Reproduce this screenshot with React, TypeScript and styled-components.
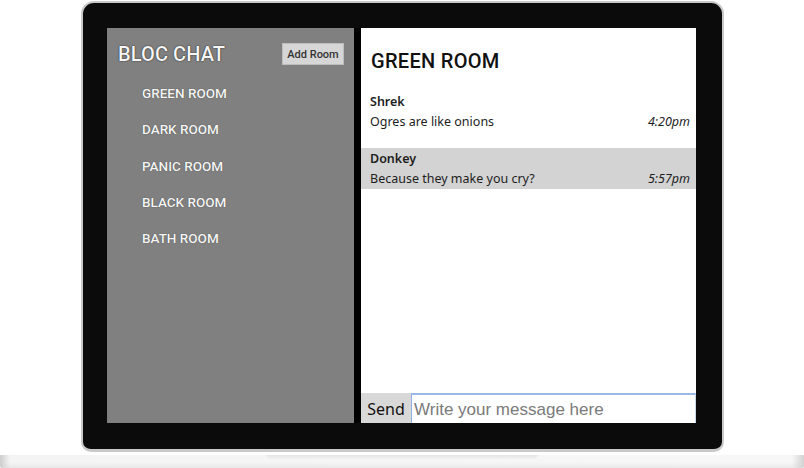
import styled, { createGlobalStyle } from "styled-components";

const Global = createGlobalStyle`
  html, body {
    margin: 0;
    padding: 0;
    background: #ffffff;
  }
  body {
    width: 804px;
    height: 468px;
    overflow: hidden;
  }
`;

const rooms = ["GREEN ROOM", "DARK ROOM", "PANIC ROOM", "BLACK ROOM", "BATH ROOM"];

const messages = [
  { user: "Shrek", content: "Ogres are like onions", time: "4:20pm", shaded: false },
  { user: "Donkey", content: "Because they make you cry?", time: "5:57pm", shaded: true },
];

const Stage = styled.div`
  width: 804px;
  height: 468px;
  display: flex;
  flex-direction: column;
  align-items: flex-start;
`;

const Bezel = styled.div`
  margin-left: 81px;
  margin-top: 1px;
  width: 643px;
  height: 451px;
  box-sizing: border-box;
  padding: 27px 26px 27px 26px;
  background: #0a0b0a;
  border: 2px solid #c9c9c9;
  border-bottom-width: 3px;
  border-radius: 13px 13px 10px 10px;
  display: flex;
`;

const Screen = styled.div`
  margin: -2px 0 0 -2px;
  width: 591px;
  height: 395px;
  display: flex;
  background: #ffffff;
`;

const Sidebar = styled.aside`
  width: 247px;
  background: #808080;
  box-shadow: 7px 0 0 #000000;
  position: relative;
  z-index: 1;
  display: flex;
  flex-direction: column;
  font-family: Roboto, "Liberation Sans", sans-serif;
  color: #f6f6f6;
`;

const SideHeader = styled.div`
  display: flex;
  justify-content: space-between;
  align-items: center;
  padding: 14px 10px 0 11px;
`;

const Brand = styled.h1`
  margin: 0;
  font-size: 20px;
  font-weight: 500;
  letter-spacing: 0.1px;
  text-shadow: 0 0 1px rgba(0, 0, 0, 0.9), 0 0 2px rgba(0, 0, 0, 0.35);
`;

const AddButton = styled.button`
  width: 62px;
  height: 22px;
  padding: 0;
  background: #d6d6d6;
  border: 1px solid #bdbdbd;
  color: #333333;
  font-family: Roboto, "Liberation Sans", sans-serif;
  font-size: 11px;
  font-weight: 500;
`;

const RoomList = styled.ul`
  list-style: none;
  margin: 0;
  padding: 19px 0 0 35px;
  display: flex;
  flex-direction: column;
  gap: 19.3px;
`;

const Room = styled.li`
  font-size: 13.5px;
  font-weight: 500;
  line-height: 17px;
  text-shadow: 0 0 1px rgba(0, 0, 0, 0.6);
`;

const Main = styled.main`
  flex: 1;
  margin-left: 7px;
  display: flex;
  flex-direction: column;
  font-family: "Noto Sans", "Open Sans", sans-serif;
  color: #1e1e1e;
`;

const RoomTitle = styled.h2`
  margin: 0;
  padding: 21px 0 0 10px;
  height: 42px;
  font-family: Roboto, "Liberation Sans", sans-serif;
  font-size: 20px;
  font-weight: 500;
  letter-spacing: 0.3px;
  color: #111111;
`;

const MessageList = styled.div`
  flex: 1;
  display: flex;
  flex-direction: column;
  gap: 16px;
`;

const Message = styled.div<{ $shaded: boolean }>`
  height: 41px;
  box-sizing: border-box;
  padding: 1px 7px 0 9px;
  background: ${(p) => (p.$shaded ? "#d3d3d3" : "transparent")};
  display: flex;
  flex-direction: column;
`;

const Username = styled.div`
  font-size: 12.5px;
  font-weight: 600;
  line-height: 20px;
`;

const Line = styled.div`
  display: flex;
  justify-content: space-between;
  font-size: 12.5px;
  line-height: 20px;
`;

const Time = styled.span`
  font-style: italic;
  margin-right: -1px;
`;

const Composer = styled.form`
  margin: 0;
  height: 30px;
  display: flex;
`;

const SendButton = styled.button`
  width: 50px;
  height: 30px;
  padding: 2px 0 0;
  border: none;
  background: #d8d8d8;
  color: #111111;
  font-family: "Noto Sans", "Open Sans", sans-serif;
  font-size: 16px;
`;

const Input = styled.input`
  flex: 1;
  min-width: 0;
  height: 30px;
  box-sizing: border-box;
  margin: 0;
  padding: 1px 2px 0;
  border: none;
  border-top: 2px solid #9ab9e6;
  border-left: 1px solid #8fb0e0;
  border-right: 1px solid #c9d8ef;
  outline: none;
  font-family: "Liberation Sans", Arial, sans-serif;
  font-size: 17px;
  color: #333333;
  &::placeholder {
    color: #7a7a7a;
  }
`;

const Base = styled.div`
  margin-top: 3px;
  width: 804px;
  height: 13px;
  background: linear-gradient(to right, #cdcdcd 0px, #f4f4f4 10px, #f7f7f7 792px, #d2d2d2 804px);
  border-radius: 0 0 2px 2px;
  display: flex;
  justify-content: center;
  position: relative;
  overflow: hidden;
  &::after {
    content: "";
    position: absolute;
    left: 0;
    right: 0;
    bottom: 0;
    height: 6px;
    background: linear-gradient(to bottom, rgba(255, 255, 255, 0), rgba(210, 210, 210, 0.35));
  }
`;

const Lip = styled.div`
  width: 272px;
  height: 4px;
  background: linear-gradient(to bottom, #e4e4e4, #f2f2f2);
  clip-path: polygon(0 0, 100% 0, 99% 100%, 1% 100%);
`;

export default function App() {
  return (
    <Stage>
      <Global />
      <Bezel>
        <Screen>
          <Sidebar>
            <SideHeader>
              <Brand>BLOC CHAT</Brand>
              <AddButton type="button">Add Room</AddButton>
            </SideHeader>
            <RoomList>
              {rooms.map((r) => (
                <Room key={r}>{r}</Room>
              ))}
            </RoomList>
          </Sidebar>
          <Main>
            <RoomTitle>GREEN ROOM</RoomTitle>
            <MessageList>
              {messages.map((m) => (
                <Message key={m.user} $shaded={m.shaded}>
                  <Username>{m.user}</Username>
                  <Line>
                    <span>{m.content}</span>
                    <Time>{m.time}</Time>
                  </Line>
                </Message>
              ))}
            </MessageList>
            <Composer onSubmit={(e) => e.preventDefault()}>
              <SendButton type="submit">Send</SendButton>
              <Input placeholder="Write your message here" />
            </Composer>
          </Main>
        </Screen>
      </Bezel>
      <Base>
        <Lip />
      </Base>
    </Stage>
  );
}
